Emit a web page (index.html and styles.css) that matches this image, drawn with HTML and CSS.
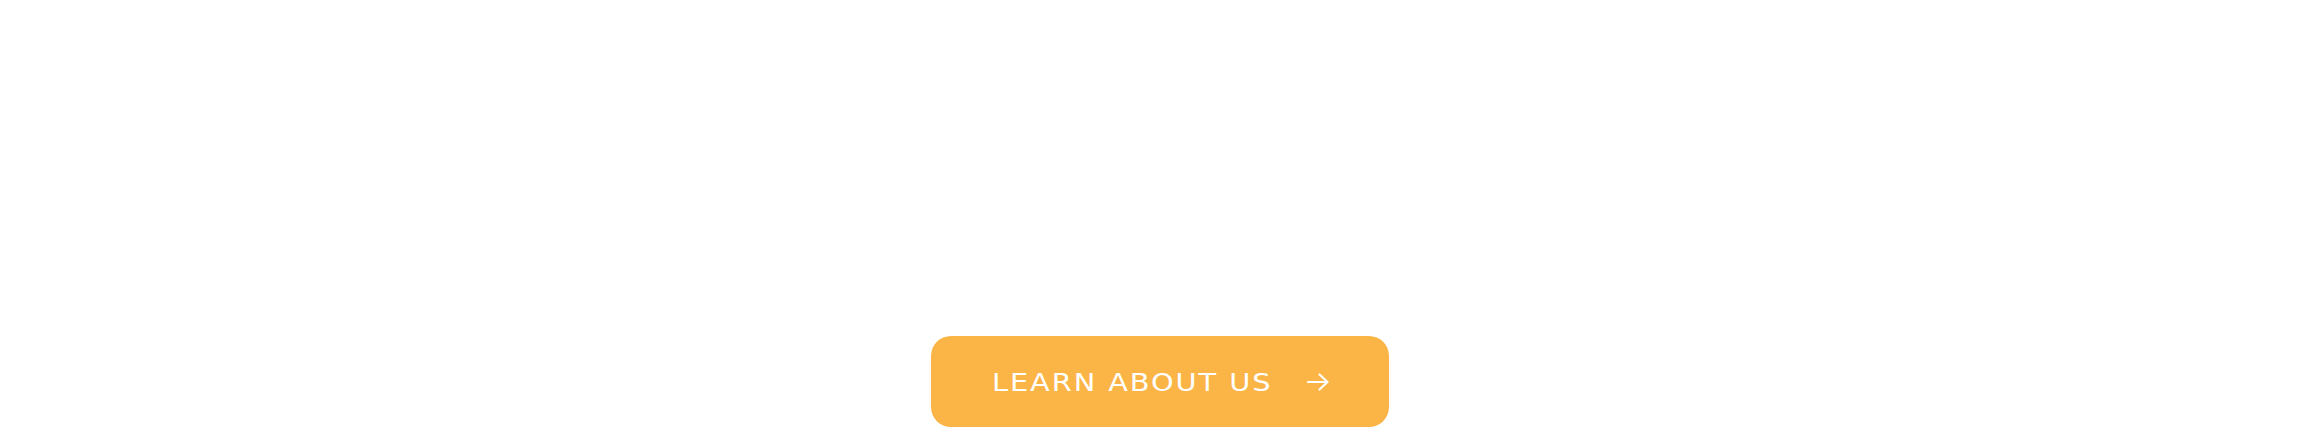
FILE: index.html
```html
<!DOCTYPE html>
<html lang="en">
<head>
<meta charset="utf-8">
<title>Learn about us</title>
<link rel="stylesheet" href="styles.css">
</head>
<body>
<section class="cta">
  <a class="btn" href="#">
    <span class="btn-label">LEARN ABOUT US</span>
    <svg class="btn-arrow" width="22" height="18" viewBox="0 0 22 18" aria-hidden="true">
      <path d="M1 9 H20.5 M12.5 1.5 L20.5 9 L12.5 16.5" fill="none" stroke="#fff" stroke-width="2.2" stroke-linecap="round" stroke-linejoin="round"/>
    </svg>
  </a>
</section>
</body>
</html>
```
FILE: styles.css
```css
html, body {
  margin: 0;
  padding: 0;
  background: #ffffff;
}
.cta {
  display: flex;
  justify-content: center;
  padding-top: 336px;
}
.btn {
  box-sizing: border-box;
  width: 458px;
  height: 91px;
  display: flex;
  align-items: center;
  justify-content: space-between;
  padding: 2px 60px 0 61px;
  background: #fbb547;
  border-radius: 20px;
  text-decoration: none;
  color: #ffffff;
}
.btn-label {
  display: inline-block;
  font-family: "DejaVu Sans", "Liberation Sans", sans-serif;
  font-size: 24px;
  font-weight: 400;
  letter-spacing: 1.6px;
  line-height: 1;
  white-space: nowrap;
  transform: scaleX(1.2);
  transform-origin: left center;
}
.btn-arrow {
  display: block;
  margin-top: -2px;
}
```
